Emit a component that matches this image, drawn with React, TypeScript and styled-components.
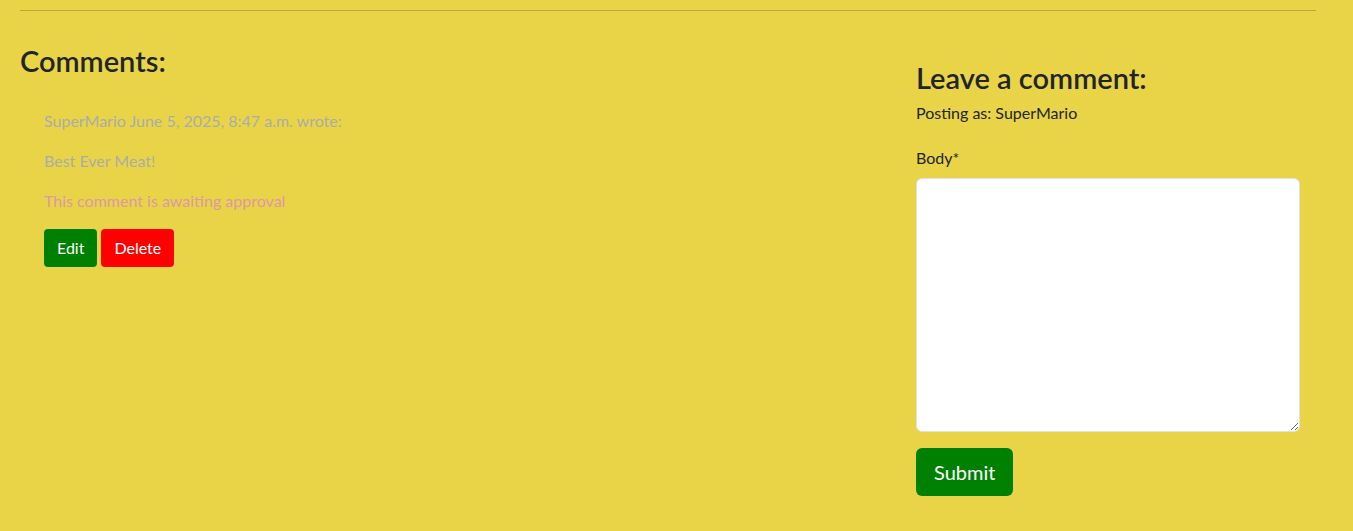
import React from "react";
import styled, { createGlobalStyle } from "styled-components";

const GlobalStyle = createGlobalStyle`
  html, body {
    margin: 0;
    padding: 0;
    background-color: #e9d447;
  }
  body {
    font-family: "Lato", "Noto Sans", sans-serif;
    font-size: 16px;
    line-height: 1.5;
    color: #212529;
  }
  * {
    box-sizing: border-box;
  }
`;

const Page = styled.main`
  padding: 0 37px 35px 20px;
  min-height: 531px;
`;

const Divider = styled.hr`
  margin: 10px 0 0;
  border: 0;
  border-top: 1px solid #b8a840;
`;

const Row = styled.div`
  display: grid;
  grid-template-columns: 896px 1fr;
`;

const Heading = styled.h3<{ $top: number }>`
  margin: ${(p) => p.$top}px 0 0;
  font-size: 29px;
  font-weight: 600;
  line-height: 1.2;
`;

const CommentCard = styled.div`
  padding: 30px 24px 0;
`;

const CommentText = styled.p<{ $pending?: boolean }>`
  margin: 0 0 16px;
  color: ${(p) => (p.$pending ? "#dd98a9" : "#a9adaa")};
`;

const ButtonRow = styled.div`
  display: flex;
  gap: 4px;
`;

const Button = styled.button<{ $variant: "edit" | "delete" | "submit" }>`
  border: 0;
  color: #fff;
  font-family: inherit;
  cursor: pointer;
  background-color: ${(p) => (p.$variant === "delete" ? "#ff0000" : "#008000")};
  font-size: ${(p) => (p.$variant === "submit" ? "20px" : "16px")};
  line-height: 1.5;
  padding: ${(p) => (p.$variant === "submit" ? "9px 18px" : "7px 13px")};
  border-radius: ${(p) => (p.$variant === "submit" ? "6px" : "4px")};
`;

const FormColumn = styled.section`
  padding-right: 16px;
`;

const Posting = styled.p`
  margin: 5px 0 21px;
`;

const Label = styled.label`
  display: block;
  margin-bottom: 8px;
`;

const BodyInput = styled.textarea`
  display: block;
  width: 384px;
  height: 254px;
  border: 1px solid #dee2e6;
  border-radius: 6px;
  background: #fff;
  font-family: inherit;
  font-size: 16px;
  padding: 6px 12px;
  margin-bottom: 16px;
`;

export default function App() {
  return (
    <>
      <GlobalStyle />
      <Page>
        <Divider />
        <Row>
          <div>
            <Heading $top={33}>Comments:</Heading>
            <CommentCard>
              <CommentText>SuperMario June 5, 2025, 8:47 a.m. wrote:</CommentText>
              <CommentText>Best Ever Meat!</CommentText>
              <CommentText $pending>This comment is awaiting approval</CommentText>
              <ButtonRow>
                <Button $variant="edit">Edit</Button>
                <Button $variant="delete">Delete</Button>
              </ButtonRow>
            </CommentCard>
          </div>
          <FormColumn>
            <Heading $top={50}>Leave a comment:</Heading>
            <Posting>Posting as: SuperMario</Posting>
            <form>
              <Label htmlFor="body">Body*</Label>
              <BodyInput id="body" name="body" />
              <Button $variant="submit" type="submit">
                Submit
              </Button>
            </form>
          </FormColumn>
        </Row>
      </Page>
    </>
  );
}
